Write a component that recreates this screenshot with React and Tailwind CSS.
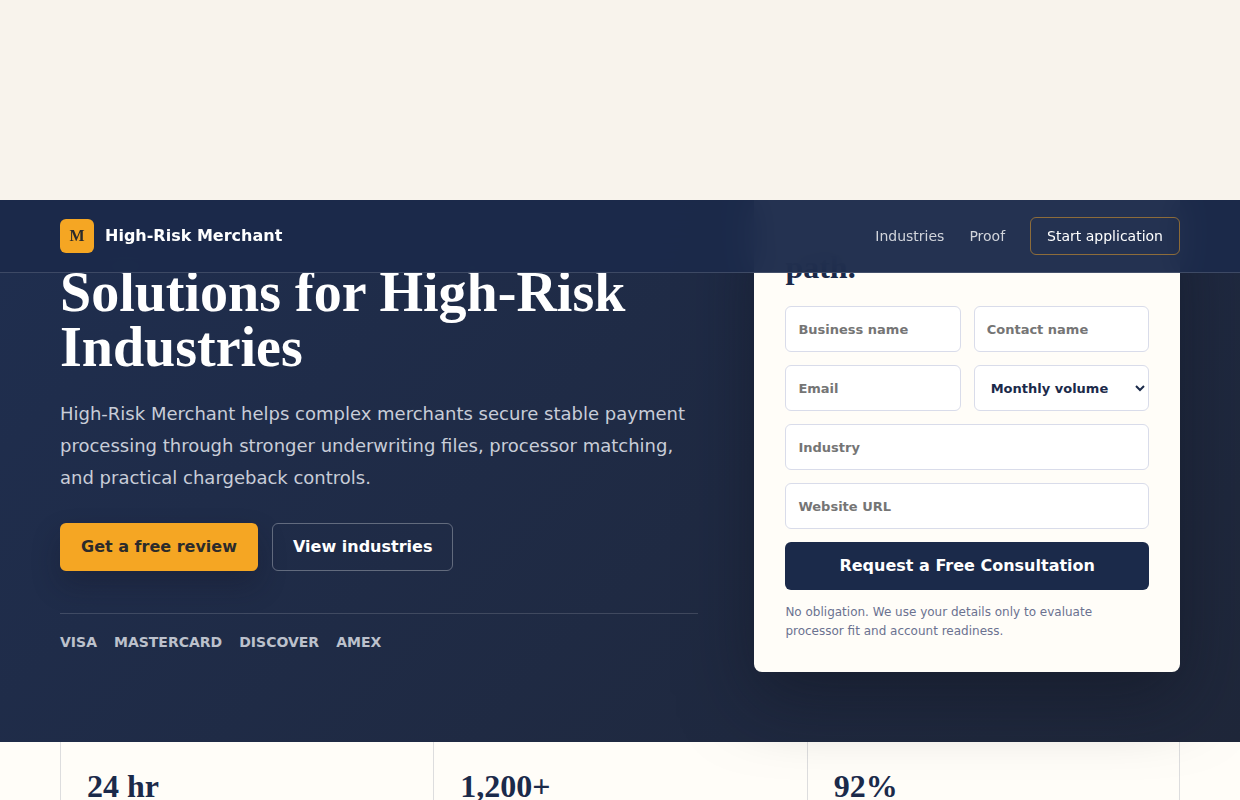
import React, { useState } from 'react';

const cards = ['Visa', 'Mastercard', 'Discover', 'Amex'];

const stats = ['24 hr', '1,200+', '92%'];

const fieldClass =
  'w-full h-[46px] rounded-md border border-[#d9dcea] bg-white px-3 text-[13px] font-bold text-[#1b2a4a] placeholder:text-[#757575] focus:outline-2 focus:outline-[#f5a623]';

const Navbar = () => (
  <header className="absolute inset-x-0 top-0 z-20 border-b border-white/15 bg-[#1b2a4a]/96 backdrop-blur-lg">
    <nav className="max-w-[1120px] h-[72px] mx-auto flex items-center justify-between">
      {/* Logo */}
      <a href="#top" className="flex items-center gap-[11px] text-base font-bold text-white">
        <span className="flex items-center justify-center w-[34px] h-[34px] rounded-md bg-[#f5a623] font-['Liberation_Serif',serif] text-[#2b2b2b]">
          M
        </span>
        High-Risk Merchant
      </a>

      <div className="flex items-center gap-[25px] text-sm text-[#d1d4db]">
        <a href="#industries" className="hover:text-white">Industries</a>
        <a href="#proof" className="hover:text-white">Proof</a>
        <a
          href="#apply"
          className="flex items-center h-[38px] px-4 rounded-md border border-[#f5a623]/50 text-white"
        >
          Start application
        </a>
      </div>
    </nav>
  </header>
);

const ConsultationForm = () => {
  const [volume, setVolume] = useState('');

  return (
    <form
      id="apply"
      onSubmit={(e) => e.preventDefault()}
      className="rounded-b-lg bg-[#fffdf8] px-[31px] pt-[50px] pb-[31px] shadow-[0_24px_70px_rgba(16,20,32,0.5)]"
    >
      <h2 className="mb-[21px] font-['Liberation_Serif',serif] text-[32px] leading-[35px] font-bold text-[#1b2a4a]">
        path.
      </h2>
      <div className="grid grid-cols-2 gap-[13px]">
        <input className={fieldClass} type="text" aria-label="Business name" placeholder="Business name" />
        <input className={fieldClass} type="text" aria-label="Contact name" placeholder="Contact name" />
        <input className={fieldClass} type="email" aria-label="Email" placeholder="Email" />
        <select
          className={fieldClass}
          aria-label="Monthly volume"
          value={volume}
          onChange={(e) => setVolume(e.target.value)}
        >
          <option value="">Monthly volume</option>
        </select>
        <input className={`${fieldClass} col-span-2`} type="text" aria-label="Industry" placeholder="Industry" />
        <input className={`${fieldClass} col-span-2`} type="url" aria-label="Website URL" placeholder="Website URL" />
        <button type="submit" className="col-span-2 h-12 rounded-md bg-[#1b2a4a] text-base font-bold text-white">
          Request a Free Consultation
        </button>
      </div>
      <p className="mt-[13px] text-xs leading-[19px] text-[#6b7290]">
        No obligation. We use your details only to evaluate processor fit and account readiness.
      </p>
    </form>
  );
};

const Hero = () => (
  <section className="relative bg-linear-135 from-[#1f2e4f] to-[#1f273a] pb-[70px]">
    <Navbar />
    <div className="max-w-[1120px] mx-auto grid grid-cols-[3fr_2fr] items-start gap-14">
      <div className="pt-[65px]">
        <h1 className="font-['Liberation_Serif',serif] text-[56px] leading-[55px] font-bold text-white">
          Solutions for High-Risk Industries
        </h1>
        <p className="mt-[23px] text-lg leading-8 text-[#c8cdd8]">
          High-Risk Merchant helps complex merchants secure stable payment processing through stronger
          underwriting files, processor matching, and practical chargeback controls.
        </p>
        <div className="mt-[29px] flex gap-[14px] text-base font-bold">
          <a
            href="#apply"
            className="flex items-center h-12 px-[21px] rounded-md bg-[#f5a623] text-[#2b2b2b] shadow-[0_14px_28px_rgba(20,20,35,0.3)]"
          >
            Get a free review
          </a>
          <a href="#industries" className="flex items-center h-12 px-5 rounded-md border border-white/30 text-white">
            View industries
          </a>
        </div>
        <ul className="mt-[42px] pt-[18px] flex gap-[17px] border-t border-white/15 text-sm font-bold uppercase text-[#bcc1cc]">
          {cards.map((card) => (
            <li key={card}>{card}</li>
          ))}
        </ul>
      </div>
      <ConsultationForm />
    </div>
  </section>
);

const Stats = () => (
  <section id="proof" className="bg-[#fffdf8]">
    <div className="max-w-[1120px] mx-auto grid grid-cols-3">
      {stats.map((value) => (
        <div key={value} className="border-l last:border-r border-[#1b2a4a]/15 px-[26px] pt-[26px] pb-[26px]">
          <strong className="block font-['Liberation_Serif',serif] text-[32px] leading-9 font-bold text-[#1b2a4a]">
            {value}
          </strong>
        </div>
      ))}
    </div>
  </section>
);

const App = () => (
  <main id="top" className="font-['DejaVu_Sans',sans-serif] bg-[#f8f3ec]">
    <div className="relative z-10 h-[200px] bg-[#f8f3ec]" />
    <Hero />
    <Stats />
  </main>
);

export default App;
